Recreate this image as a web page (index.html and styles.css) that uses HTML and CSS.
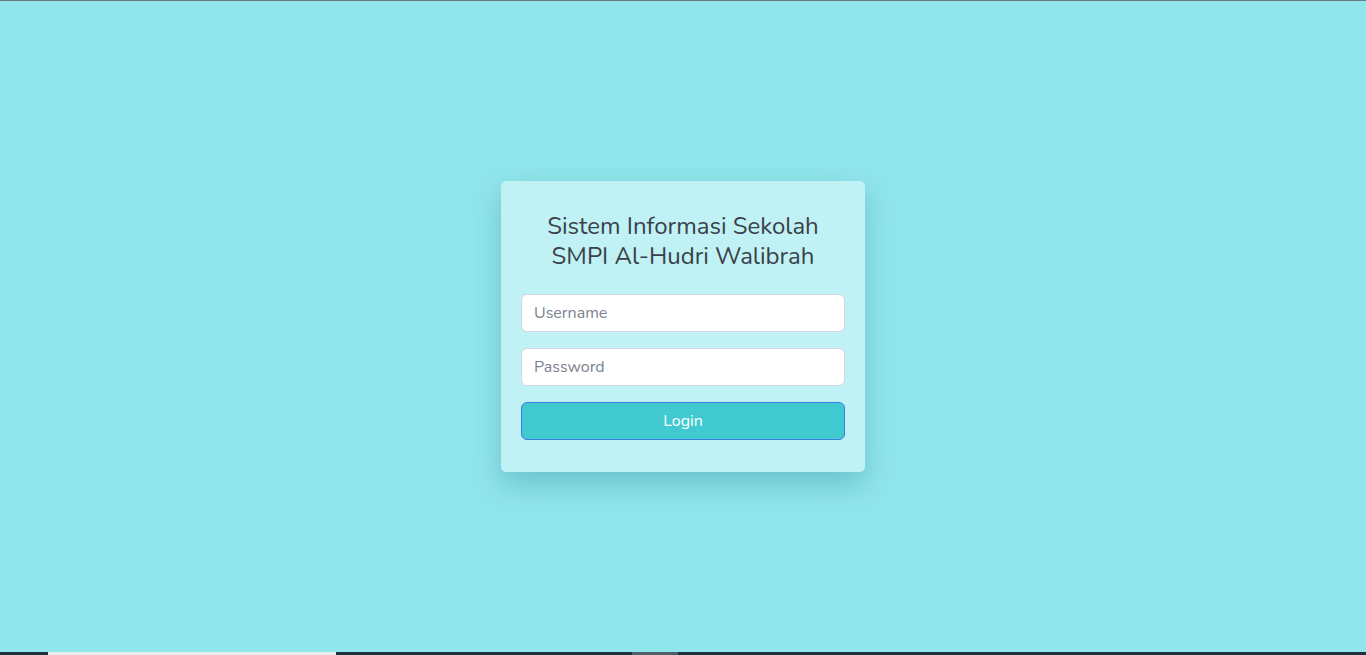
FILE: index.html
```html
<!DOCTYPE html>
<html lang="id">
<head>
<meta charset="utf-8">
<title>Login - SMPI Al-Hudri Walibrah</title>
<link rel="stylesheet" href="styles.css">
</head>
<body>
<div class="topline"></div>
<main class="stage">
  <form class="card">
    <h1 class="title">Sistem Informasi Sekolah<br>SMPI Al-Hudri Walibrah</h1>
    <input class="field" type="text" placeholder="Username">
    <input class="field" type="password" placeholder="Password">
    <button class="btn" type="button">Login</button>
  </form>
</main>
<div class="taskbar">
  <div class="tb-gap1"></div>
  <div class="tb-window"></div>
  <div class="tb-gap2"></div>
  <div class="tb-tab"></div>
  <div class="tb-rest"></div>
</div>
</body>
</html>
```
FILE: styles.css
```css
* { box-sizing: border-box; }
html, body { margin: 0; height: 100%; }
body {
  display: flex;
  flex-direction: column;
  background: #91e5ec;
  font-family: "Nunito", "Lato", "Noto Sans", sans-serif;
}
.topline { height: 1px; background: #6c7a86; flex: none; }
.stage {
  flex: 1;
  display: flex;
  align-items: center;
  justify-content: center;
}
.card {
  width: 364px;
  background: #bff1f5;
  border-radius: 5px;
  padding: 30px 20px 32px;
  box-shadow: 0 12px 28px rgba(40, 130, 145, 0.35);
  display: flex;
  flex-direction: column;
}
.title {
  margin: 0 0 23px;
  font-size: 24px;
  line-height: 30px;
  font-weight: 400;
  text-align: center;
  color: #3a4148;
}
.field {
  height: 38px;
  border: 1px solid #d3d4e6;
  border-radius: 6px;
  background: #fff;
  padding: 0 12px;
  font: inherit;
  font-size: 16px;
  color: #333;
  margin-bottom: 16px;
  outline: none;
}
.field::placeholder { color: #7c8290; }
.btn {
  height: 38px;
  border: 1px solid #3c7be8;
  border-radius: 6px;
  background: #40cad0;
  color: #fff;
  font: inherit;
  font-size: 16px;
}
.taskbar { height: 3px; flex: none; display: flex; background: #1f323c; }
.tb-gap1 { width: 48px; }
.tb-window { width: 288px; background: #ececec; }
.tb-gap2 { width: 296px; }
.tb-tab { width: 46px; background: #4e5f66; }
.tb-rest { flex: 1; }
```
